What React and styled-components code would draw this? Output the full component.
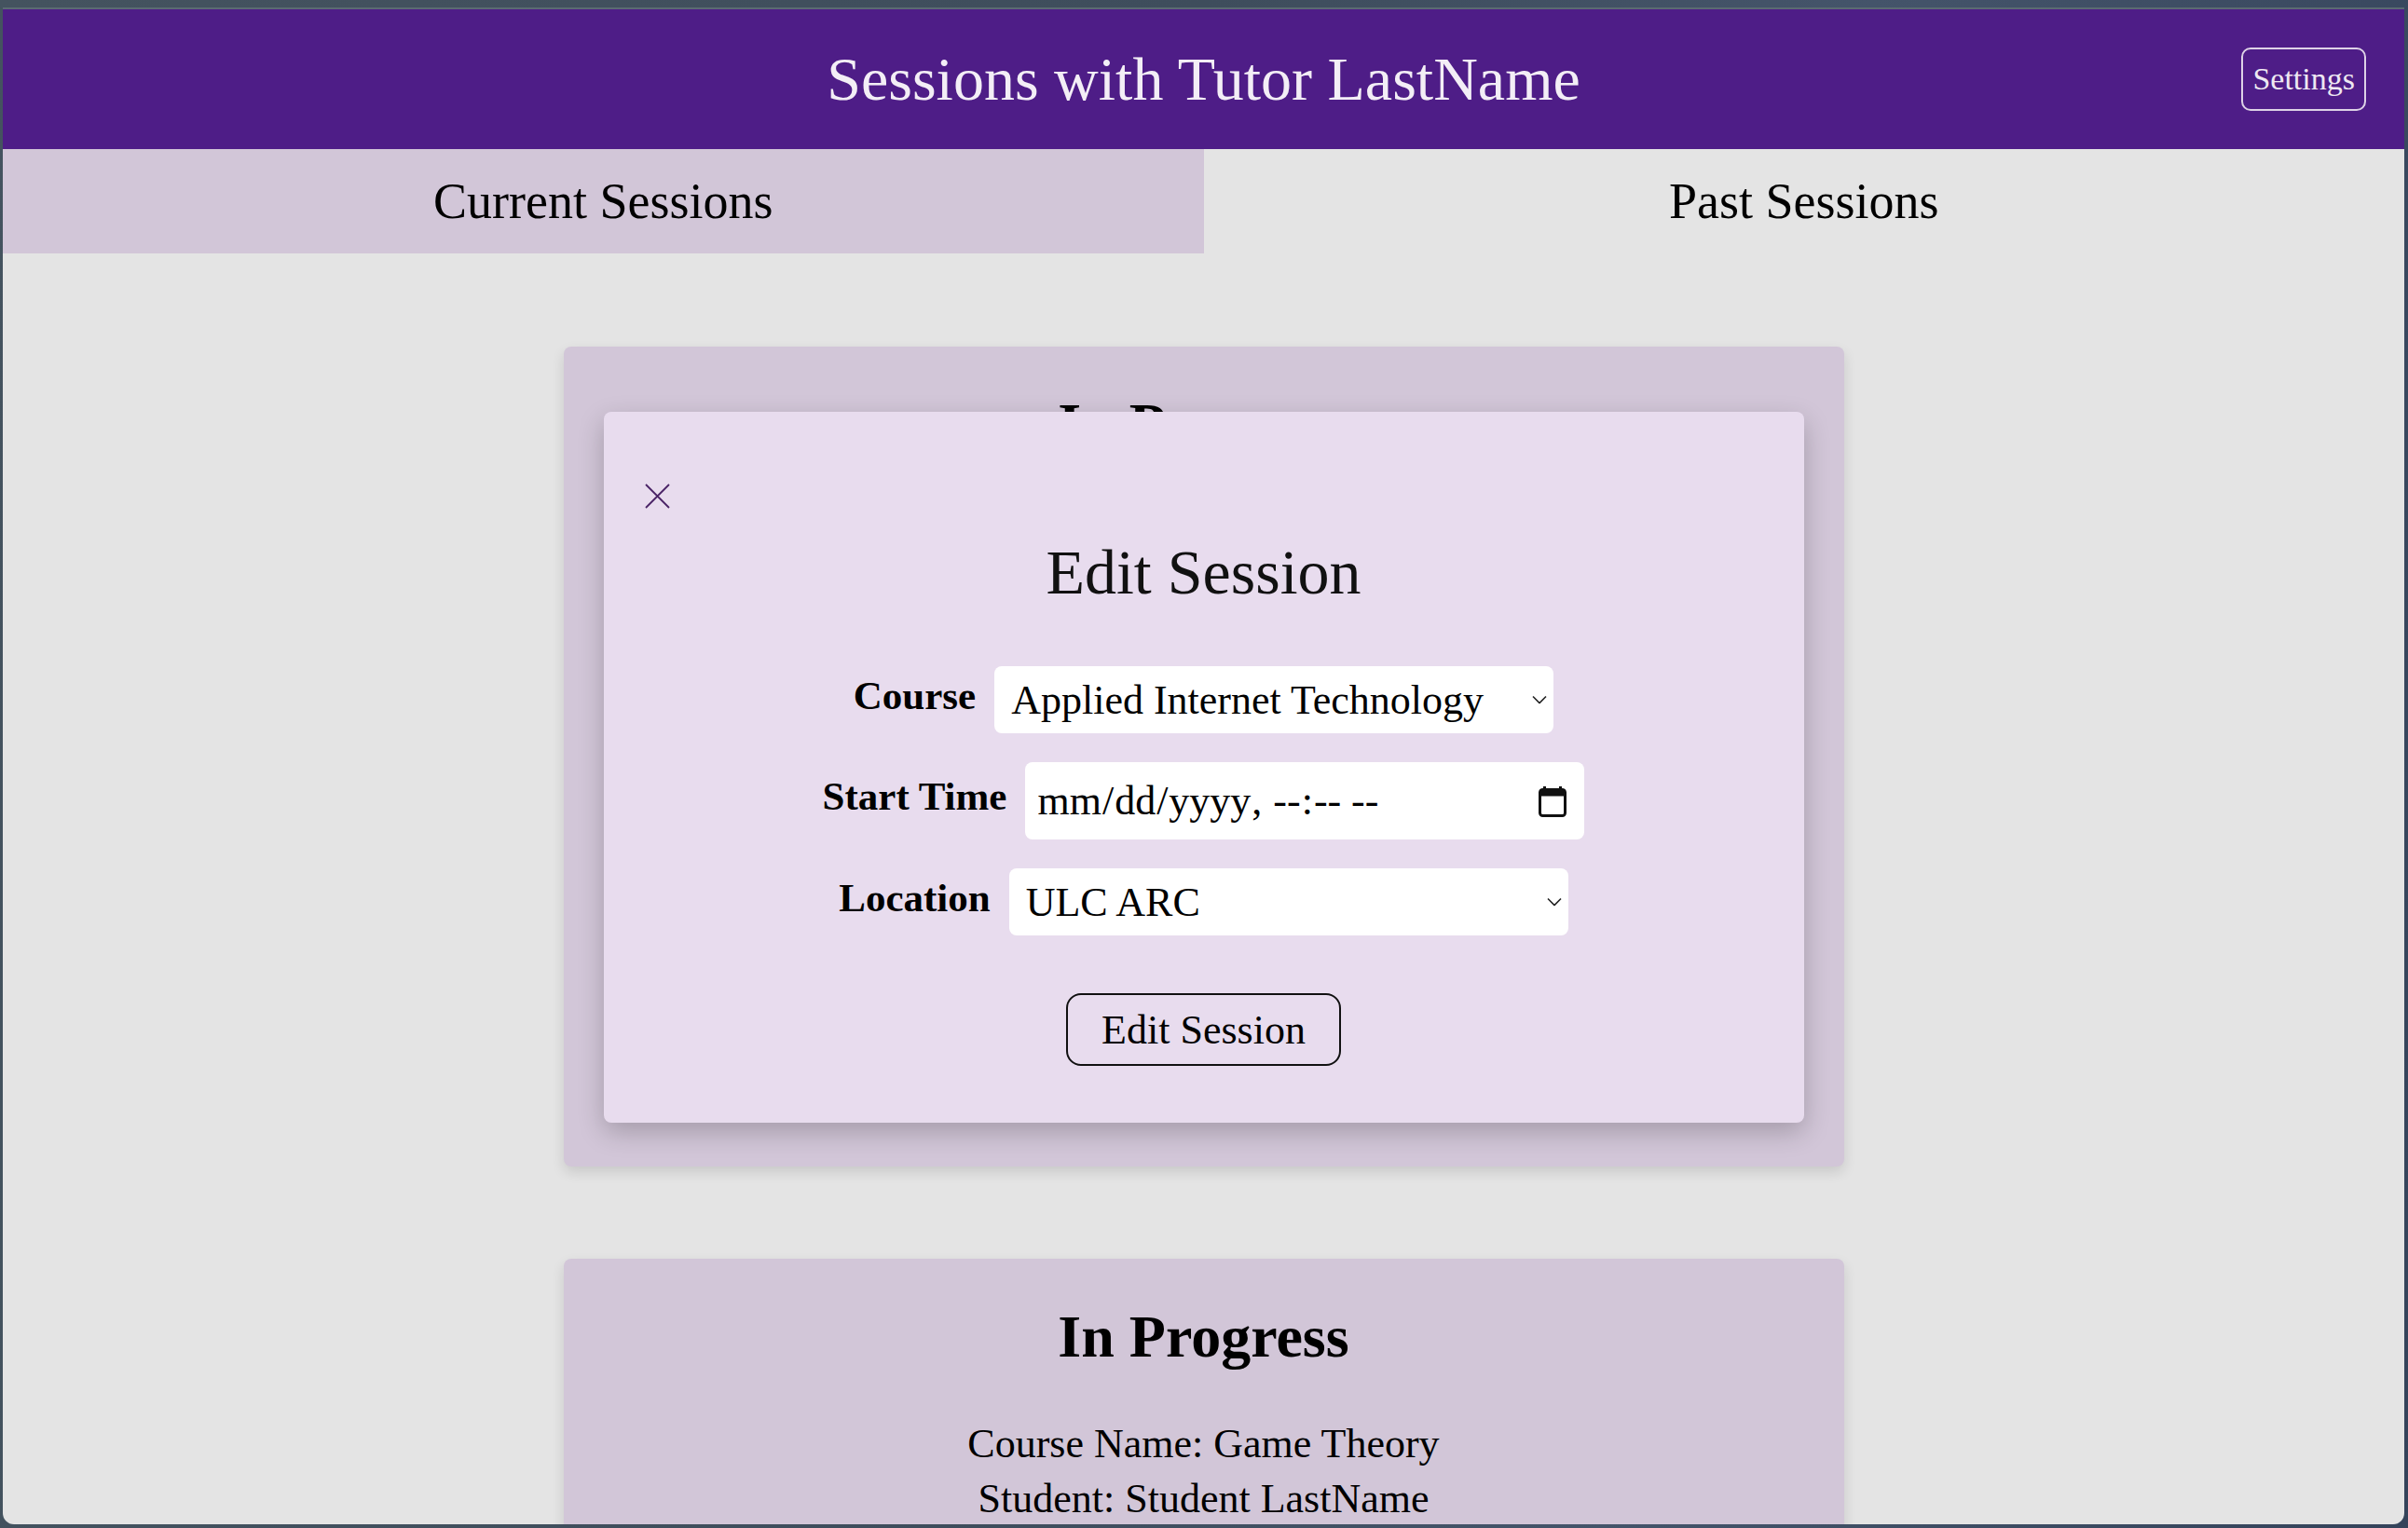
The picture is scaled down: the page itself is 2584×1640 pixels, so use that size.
import React from 'react'
import styled, { createGlobalStyle } from 'styled-components'

const serif = `"Liberation Serif", "Times New Roman", serif`

const GlobalStyle = createGlobalStyle`
  html, body {
    margin: 0;
    padding: 0;
  }
  body {
    background: #3b4a5b;
    font-family: ${serif};
    overflow: hidden;
  }
  * {
    box-sizing: border-box;
  }
`

const Desktop = styled.div`
  height: 1640px;
  padding: 8px 4px 4px 3px;
  background: linear-gradient(100deg, #44535f 0%, #3e4d5c 45%, #44546a 70%, #34435a 100%);
`

const Window = styled.div`
  height: 100%;
  display: flex;
  flex-direction: column;
  background: #e4e4e4;
  border-top: 2px solid #5b6b72;
  border-radius: 0 0 12px 12px;
  overflow: hidden;
`

const Header = styled.header`
  flex: none;
  height: 150px;
  background: #4e1d87;
  display: grid;
  grid-template-columns: 1fr auto 1fr;
  align-items: center;
  padding: 0 41px;
`

const Title = styled.h1`
  grid-column: 2;
  margin: 0;
  font-size: 66px;
  font-weight: 400;
  color: #f3eef6;
  white-space: nowrap;
`

const SettingsButton = styled.button`
  grid-column: 3;
  justify-self: end;
  height: 68px;
  padding: 0 10px;
  border: 2px solid #ddd2e6;
  border-radius: 10px;
  background: transparent;
  color: #eee8f2;
  font-family: ${serif};
  font-size: 34px;
  cursor: pointer;
`

const Tabs = styled.nav`
  flex: none;
  height: 112px;
  display: grid;
  grid-template-columns: 1fr 1fr;
`

const Tab = styled.div`
  display: flex;
  align-items: center;
  justify-content: center;
  font-size: 54px;
  color: #000;
  background: ${p => (p.$active ? '#d2c6d8' : '#e4e4e4')};
  cursor: pointer;
`

const Main = styled.main`
  flex: 1;
  display: flex;
  flex-direction: column;
  align-items: center;
  gap: 99px;
  padding-top: 100px;
`

const Card = styled.section`
  position: relative;
  flex: none;
  width: 1374px;
  min-height: ${p => p.$minHeight || 'auto'};
  padding: 47px 40px 40px;
  background: #d2c6d8;
  border-radius: 8px;
  box-shadow: 0 6px 14px rgba(0, 0, 0, 0.12);
  text-align: center;
  color: #000;
`

const CardHeading = styled.h2`
  margin: 0 0 48px;
  font-size: 64px;
  font-weight: 700;
`

const CardLine = styled.p`
  margin: 0;
  font-size: 44px;
  line-height: 59px;
`

const Modal = styled.div`
  position: absolute;
  top: 70px;
  left: 43px;
  right: 43px;
  display: flex;
  flex-direction: column;
  align-items: center;
  padding: 77px 44px 61px;
  background: #e8dcee;
  border-radius: 8px;
  box-shadow: 0 10px 28px rgba(0, 0, 0, 0.22);
`

const CloseButton = styled.button`
  align-self: flex-start;
  display: block;
  width: 27px;
  height: 27px;
  padding: 0;
  border: none;
  background: none;
  cursor: pointer;
`

const ModalTitle = styled.h2`
  margin: 29px 0 61px;
  font-size: 68px;
  font-weight: 400;
  color: #111;
`

const Form = styled.form`
  display: flex;
  flex-direction: column;
  align-items: center;
  gap: 31px;
`

const Row = styled.div`
  display: flex;
  align-items: center;
  gap: 20px;
`

const Label = styled.label`
  margin-bottom: 10px;
  font-size: 43px;
  font-weight: 700;
  color: #000;
  white-space: nowrap;
`

const FieldWrap = styled.div`
  position: relative;
  width: 600px;
`

const Select = styled.select`
  appearance: none;
  display: block;
  width: 100%;
  height: 72px;
  padding: 0 40px 0 18px;
  border: none;
  border-radius: 8px;
  background: #fff;
  color: #000;
  font-family: ${serif};
  font-size: 44px;
  outline: none;
`

const Chevron = styled.svg`
  position: absolute;
  right: 7px;
  top: 50%;
  transform: translateY(-50%);
  pointer-events: none;
`

const CalendarIcon = styled.svg`
  position: absolute;
  right: 19px;
  top: 50%;
  transform: translateY(-50%);
  pointer-events: none;
`

const DateInput = styled.input`
  display: block;
  width: 100%;
  height: 83px;
  padding: 0 12px;
  border: none;
  border-radius: 8px;
  background: #fff;
  color: #000;
  font-family: ${serif};
  font-size: 44px;
  outline: none;

  &::-webkit-calendar-picker-indicator {
    opacity: 0;
    width: 32px;
    height: 34px;
    padding: 0;
    margin-right: 6px;
    cursor: pointer;
  }
`

const SubmitButton = styled.button`
  margin-top: 31px;
  height: 78px;
  padding: 0 36px;
  border: 2px solid #111;
  border-radius: 16px;
  background: transparent;
  color: #000;
  font-family: ${serif};
  font-size: 44px;
  cursor: pointer;
`

const ChevronIcon = () => (
  <Chevron width="16" height="9" viewBox="0 0 16 9">
    <path d="M1 1 L8 8 L15 1" fill="none" stroke="#222" strokeWidth="1.6" />
  </Chevron>
)

const Calendar = () => (
  <CalendarIcon width="30" height="34" viewBox="0 0 30 34">
    <rect x="1.5" y="4.5" width="27" height="28" rx="3" fill="none" stroke="#111" strokeWidth="3" />
    <rect x="1.5" y="4.5" width="27" height="7" fill="#111" />
    <rect x="5" y="1" width="3" height="5" fill="#111" />
    <rect x="22" y="1" width="3" height="5" fill="#111" />
  </CalendarIcon>
)

const Dropdown = ({ id, value, options }) => (
  <FieldWrap>
    <Select id={id} defaultValue={value}>
      {options.map(o => (
        <option key={o}>{o}</option>
      ))}
    </Select>
    <ChevronIcon />
  </FieldWrap>
)

const courses = ['Applied Internet Technology', 'Game Theory', 'Data Structures']
const locations = ['ULC ARC', 'Bobst Library', 'Online']

export default function App() {
  return (
    <>
      <GlobalStyle />
      <Desktop>
        <Window>
          <Header>
            <Title>Sessions with Tutor LastName</Title>
            <SettingsButton>Settings</SettingsButton>
          </Header>
          <Tabs>
            <Tab $active>Current Sessions</Tab>
            <Tab>Past Sessions</Tab>
          </Tabs>
          <Main>
            <Card $minHeight="880px">
              <CardHeading>In Progress</CardHeading>
              <CardLine>Course Name: Applied Internet Technology</CardLine>
              <CardLine>Student: Student LastName</CardLine>
              <CardLine>Location: ULC ARC</CardLine>

              <Modal role="dialog">
                <CloseButton aria-label="Close">
                  <svg width="27" height="27" viewBox="0 0 27 27">
                    <path d="M1 1 L26 26 M26 1 L1 26" stroke="#4a2366" strokeWidth="1.8" />
                  </svg>
                </CloseButton>
                <ModalTitle>Edit Session</ModalTitle>
                <Form onSubmit={e => e.preventDefault()}>
                  <Row>
                    <Label htmlFor="course">Course</Label>
                    <Dropdown id="course" value="Applied Internet Technology" options={courses} />
                  </Row>
                  <Row>
                    <Label htmlFor="start">Start Time</Label>
                    <FieldWrap>
                      <DateInput id="start" type="datetime-local" />
                      <Calendar />
                    </FieldWrap>
                  </Row>
                  <Row>
                    <Label htmlFor="location">Location</Label>
                    <Dropdown id="location" value="ULC ARC" options={locations} />
                  </Row>
                  <SubmitButton type="submit">Edit Session</SubmitButton>
                </Form>
              </Modal>
            </Card>

            <Card>
              <CardHeading>In Progress</CardHeading>
              <CardLine>Course Name: Game Theory</CardLine>
              <CardLine>Student: Student LastName</CardLine>
              <CardLine>Location: ULC ARC</CardLine>
            </Card>
          </Main>
        </Window>
      </Desktop>
    </>
  )
}
